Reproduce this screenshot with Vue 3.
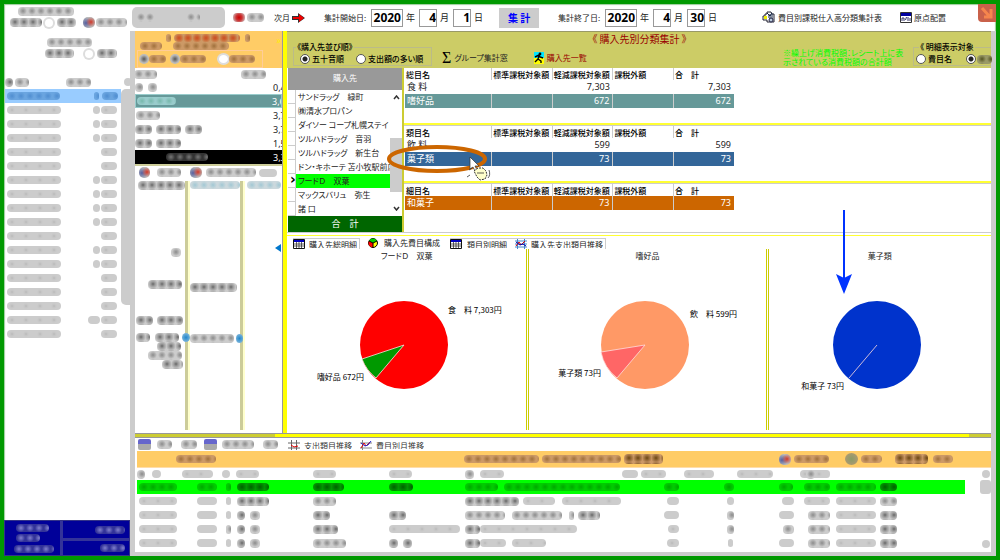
<script setup>
import { h } from 'vue'

// A run of masked-out text: [gap before, width, tone]
const Masks = (props) =>
  h('span', { class: 'masks' }, props.items.map(([gap, width, tone = 'mid']) =>
    h('span', { class: ['mask', 'mask-' + tone], style: { marginLeft: gap + 'px', width: width + 'px' } })))
Masks.props = ['items']

const months = [
  [32, 7, 16], [32, 7, 16], [32, 7, 16], [40, 0, 16], [40, 0, 16], [32, 7, 16], [32, 7, 16], [32, 7, 16], [32, 7, 16],
  [40, 0, 16], [32, 7, 16], [32, 7, 16], [40, 0, 16], [40, 0, 16], [40, 0, 16], [27, 12, 16], [40, 0, 16],
].map(([gap, first, last]) => {
  const row = [[2, 54, 'faint']]
  if (first) row.push([gap, first, 'light'], [1, last, 'faint'])
  else row.push([gap, last, 'faint'])
  return row
})

const subjects = [
  { items: [[0, 8], [5, 9]], n: '0,4' },
  { items: [[1, 39, 'teal']], n: '3,6', cls: 'teal' },
  { items: [[1, 24]], n: '3,7' },
  { items: [[0, 17, 'dark'], [4, 25, 'dark'], [4, 17, 'dark']], n: '3,7' },
  { items: [[0, 17, 'dark'], [4, 25, 'dark']], n: '1,5' },
  { items: [[31, 42, 'black']], n: '3,3', cls: 'black' },
]

const shops = ['サンドラッグ　緑町', '㈱清水プロパン', 'ダイソー コープ札幌ステイ', 'ツルハドラッグ　音羽', 'ツルハドラッグ　新生台',
  'ドン・キホーテ 苫小牧駅前店', 'フードＤ　双葉', 'マックスバリュ　弥生', '諸 口']

const tables = [
  { head: '総目名', rows: [{ name: '食 料', v: '7,303' }, { name: '嗜好品', v: '672', cls: 'teal' }] },
  { head: '類目名', rows: [{ name: '飲 料', v: '599' }, { name: '菓子類', v: '73', cls: 'blue', ring: true }] },
  { head: '細目名', rows: [{ name: '和菓子', v: '73', cls: 'orange' }] },
]

const charts = [
  { title: 'フードＤ　双葉', color: '#ff0000', slice: '#009900', path: 'M108 83L80 116A44 44 0 0 1 66 97Z',
    labels: [{ x: 152, y: 51, t: '食　料 7,303円' }, { x: 68, y: 118, t: '嗜好品 672円', end: true }] },
  { title: '嗜好品', color: '#ff9966', slice: '#ff6666', path: 'M108 83L80 116A44 44 0 0 1 64 90Z',
    labels: [{ x: 153, y: 55, t: '飲　料 599円' }, { x: 64, y: 114, t: '菓子類 73円', end: true }] },
  { title: '菓子類', color: '#0033cc', slice: 'none', path: 'M108 83L80 116', arrow: true,
    labels: [{ x: 75, y: 127, t: '和菓子 73円', end: true }] },
]

const records = [
  [[[2, 38, 'lime']], [[2, 20, 'lime']], [[3, 5, 'lime']], [[0, 32, 'limed']], [[0, 31, 'limed']], [[0, 24, 'limed']], [[0, 33, 'lime'], [6, 116, 'lime']], [[11, 15, 'lime']], [[9, 10, 'lime']], [[9, 14, 'lime']], [[2, 26, 'lime']], [[2, 40, 'lime']], [[0, 17, 'limed']]],
  [[[2, 38, 'faint']], [[2, 20, 'light']], [[3, 5, 'light']], [[0, 32, 'dark']], [[0, 23]], [], [[0, 54, 'dark'], [4, 32, 'faint'], [7, 59, 'faint']], [[14, 12, 'light']], [[12, 7, 'light']], [[12, 12, 'light']], [[2, 26, 'faint']], [[2, 40, 'faint']], [[0, 17]]],
  [[[2, 38, 'faint']], [[2, 20, 'light']], [[3, 5, 'light']], [[0, 8, 'dark'], [5, 10]], [[0, 17, 'dark']], [[0, 17, 'dark']], [[0, 40], [7, 50], [7, 5], [4, 22, 'dark']], [[11, 15, 'light']], [[12, 7]], [[9, 15, 'light']], [[6, 22]], [[2, 40, 'faint']], [[0, 17, 'dark']]],
  [[[2, 38, 'faint']], [[2, 20, 'light']], [[3, 5]], [[0, 8, 'dark'], [5, 10]], [[0, 25, 'dark']], [[0, 71, 'faint']], [[0, 15, 'dark'], [0, 97, 'faint']], [[15, 11, 'faint']], [[12, 7]], [[13, 11]], [[6, 22]], [[2, 40, 'faint']], [[0, 17, 'dark']]],
  [[[2, 38, 'faint']], [[2, 20, 'light']], [[3, 5, 'light']], [[0, 8, 'dark'], [5, 10]], [[0, 33]], [[0, 9, 'dark'], [5, 9, 'dark']], [[0, 15, 'dark'], [0, 26, 'faint'], [6, 34, 'faint']], [[14, 12, 'faint']], [[13, 5, 'light']], [[9, 15, 'light']], [[6, 22]], [[2, 40, 'faint']], [[0, 17, 'dark']]],
]
const recordHead = [
  [[0, 8], [7, 9, 'light']], [[-13, 31, 'faint']], [[-1, 8, 'light']], [[-1, 23, 'faint']], [[0, 23, 'faint']], [[0, 23, 'faint']],
  [[0, 9], [6, 24, 'faint'], [118, 16, 'light']], [[-12, 25, 'faint'], [18, 30, 'faint']], [[22, 36, 'faint']],
  [[30, 29, 'faint']], [[4, 9], [8, 7, 'light']], [], [],
]
</script>

<template>
  <div class="frame">
    <header class="topbar">
      <div class="side-tools">
        <Masks :items="[[14, 56]]" />
        <div class="line"><Masks :items="[[6, 32, 'dark'], [3, 8, 'ring'], [4, 19, 'dark'], [7, 12, 'pie'], [1, 31]]" /></div>
      </div>
      <div class="nav"><div class="veil"><Masks :items="[[4, 18], [32, 14]]" /></div><Masks :items="[[8, 12, 'red'], [2, 17]]" /></div>
      <button class="plain next">次月
        <svg width="13" height="10" viewBox="0 0 13 10"><path d="M0 3h6V0l7 5-7 5V7H0z" fill="#333" /><path d="M1 4h6V1l5 4-5 4V6H1z" fill="#f00000" /></svg>
      </button>
      <div class="date start">
        <label for="y1">集計開始日:</label><input id="y1" class="year" value="2020" /><label for="y1">年</label>
        <input id="m1" aria-label="開始月" value="4" /><label for="m1">月</label><input id="d1" aria-label="開始日" value="1" /><label for="d1">日</label>
      </div>
      <button class="calc">集 計</button>
      <div class="date end">
        <label for="y2">集計終了日:</label><input id="y2" class="year" value="2020" /><label for="y2">年</label>
        <input id="m2" aria-label="終了月" value="4" /><label for="m2">月</label><input id="d2" aria-label="終了日" value="30" /><label for="d2">日</label>
      </div>
      <button class="plain report">
        <svg width="13" height="13" viewBox="0 0 13 13"><path d="M1 5h2V3h2V1h4l1 2h2v8H5V9H1z" fill="#fff" stroke="#223" /><path d="M2 5h3v3H2z" fill="#ee0" /><path d="M6 4h5M6 6h5M7 8h4M5 2l3 3 2-3" stroke="#124" fill="none" /><circle cx="9" cy="9" r="2" fill="#bcd" stroke="#224" /></svg>
        費目別課税仕入高分類集計表
      </button>
      <button class="plain origin">
        <svg width="12" height="11" viewBox="0 0 12 11"><path d="M.5.5h11v10H.5z" fill="#fff" stroke="#333" /><path d="M1 1h10v3H1z" fill="#0000a0" /><path d="M2 9V6h2v3M5.500 8l1-3M8 5v4M10 6v3" stroke="#336" fill="none" /></svg>
        原点配置
      </button>
      <button class="close" aria-label="閉じる"><svg width="18" height="17" viewBox="0 0 18 17"><path d="M4 3l8 9M13 4v8H6" stroke="#f6854d" stroke-width="3" fill="none" /></svg></button>
    </header>

    <div class="body">
      <aside class="months">
        <div class="months-top">
          <Masks :items="[[43, 45]]" /><Masks :items="[[41, 29, 'dark'], [11, 8, 'ring'], [4, 20, 'dark']]" />
        </div>
        <div class="months-head"><Masks :items="[[1, 8, 'dark'], [2, 14], [37, 25], [33, 8, 'light']]" /></div>
        <div class="months-body">
          <div class="months-list">
            <div class="mrow current"><Masks :items="[[2, 53, 'sky'], [34, 5, 'sky'], [3, 16, 'sky']]" /></div>
            <div v-for="(m, i) in months" :key="i" class="mrow"><Masks :items="m" /></div>
          </div>
          <div class="rail"></div>
        </div>
        <div class="totals">
          <div class="total-name"><Masks :items="[[11, 33, 'navy']]" /><Masks :items="[[11, 24, 'navy']]" /><Masks :items="[[9, 40, 'navy']]" /></div>
          <div class="total-vals"><div><Masks :items="[[0, 30, 'navy']]" /></div><div><Masks :items="[[0, 25, 'navy']]" /></div></div>
        </div>
      </aside>

      <main class="work">
        <div class="upper">
          <section class="subjects">
            <div class="amber">
              <Masks :items="[[31, 5, 'amber'], [3, 66, 'rust'], [5, 5, 'amber']]" />
              <Masks :items="[[5, 22, 'amber'], [11, 56, 'amber']]" />
              <div class="amber-box"><Masks :items="[[1, 10, 'dot'], [0, 17, 'amber'], [4, 10, 'dot'], [0, 26, 'amber'], [13, 9, 'ring'], [1, 26, 'amber']]" /></div>
              <span class="more">»</span>
            </div>
            <div class="shead"><Masks :items="[[-1, 23], [84, 25]]" /></div>
            <div v-for="(s, i) in subjects" :key="i" class="srow" :class="s.cls"><Masks :items="s.items" /><span class="num">{{ s.n }}</span></div>
            <div class="stabs"><Masks :items="[[4, 11, 'pie'], [7, 24], [9, 12, 'pie'], [4, 50], [3, 18, 'light']]" /></div>
            <div class="trio">
              <div class="c1">
                <Masks :items="[[3, 47, 'dark']]" />
                <div class="c1-a"><Masks :items="[[36, 10]]" /></div>
                <div class="c1-b"><Masks :items="[[13, 34, 'dark']]" /></div>
                <div class="c1-c"><Masks :items="[[1, 17, 'dark'], [4, 26, 'dark']]" /></div>
                <div class="c1-d"><Masks :items="[[1, 14, 'dark'], [5, 24, 'dark'], [3, 8, 'node']]" /><Masks :items="[[22, 24, 'dark']]" /><Masks :items="[[13, 34]]" /><Masks :items="[[27, 21, 'dark']]" /></div>
              </div>
              <div class="c2">
                <Masks :items="[[0, 50, 'aqua']]" />
                <div class="c2-a"><Masks :items="[[0, 47, 'dark']]" /></div>
                <div class="c2-b"><Masks :items="[[0, 44], [2, 7, 'node']]" /></div>
              </div>
              <div class="c3"><Masks :items="[[1, 34, 'aqua']]" /><span class="collapse"></span></div>
            </div>
          </section>

          <section class="detail">
            <div class="olive">
              <h1>《 購入先別分類集計 》</h1>
              <div class="olive-row">
                <fieldset class="sort"><legend>《購入先並び順》</legend>
                  <label><input type="radio" name="sort" checked />五十音順</label>
                  <label><input type="radio" name="sort" />支出額の多い順</label>
                </fieldset>
                <button class="plain sum"><b>Σ</b>グループ集計窓</button>
                <button class="plain list">
                  <svg width="10" height="12" viewBox="0 0 10 12"><path d="M0 0h10v12H0z" fill="#00e5ff" /><path d="M0 6h10v6H0z" fill="#ff0" /><circle cx="6" cy="2" r="1.4" /><path d="M1 5l4-2 1 2 3 1M5 4L4 7l3 2v2M4 7l-3 3" stroke="#000" stroke-width="1.4" fill="none" /></svg>
                  購入先一覧
                </button>
                <p class="note">※繰上げ消費税額：レシート上に表<br />示されている消費税額の合計額</p>
                <fieldset class="target"><legend>《 明細表示対象</legend>
                  <label><input type="radio" name="target" />費目名</label>
                  <label><input type="radio" name="target" aria-label="細目名" checked /><Masks :items="[[-1, 15, 'olive']]" /></label>
                </fieldset>
              </div>
            </div>

            <div class="mid">
              <div class="shops">
                <div class="shops-head">購入先</div>
                <div class="shops-body">
                  <ul>
                    <li v-for="s in shops" :key="s" :class="{ on: s.startsWith('フード') }"><i></i><span>{{ s }}</span></li>
                  </ul>
                  <div class="scroll"><svg width="7" height="5" viewBox="0 0 7 5"><path d="M1 4l2.500-3L6 4" /></svg><div class="thumb"></div><svg width="7" height="5" viewBox="0 0 7 5"><path d="M1 1l2.500 3L6 1" /></svg></div>
                </div>
                <div class="shops-foot">合　計</div>
              </div>
              <div class="tables">
                <div v-for="t in tables" :key="t.head" class="pane">
                  <table>
                    <thead><tr><th>{{ t.head }}</th><th>標準課税対象額</th><th>軽減課税対象額</th><th>課税外額</th><th>合　計</th></tr></thead>
                    <tbody>
                      <tr v-for="r in t.rows" :key="r.name" :class="r.cls ? ['lit', r.cls] : 'normal'">
                        <td>{{ r.name }}
                          <svg v-if="r.ring" class="ring" width="108" height="40" viewBox="0 0 108 40">
                            <ellipse cx="52" cy="14" rx="48" ry="12" fill="none" stroke="#cc6600" stroke-width="4" />
                            <path d="M85 12v12l3-2 2 4 2-1-2-4h4z" fill="#fff" stroke="#333" stroke-width=".7" />
                            <path d="M89 26l4-3 5 0 3 3 1 4-2 4-5 1-3-3z" fill="#ffffcc" stroke="#333" stroke-dasharray="2 1" />
                            <path d="M92 28h7M85 30l-3 2M104 25c1 3 1 6-1 8M84 25l3-2" stroke="#333" fill="none" stroke-width=".8" />
                          </svg>
                        </td><td></td><td>{{ r.v }}</td><td></td><td>{{ r.v }}</td>
                      </tr>
                    </tbody>
                  </table>
                </div>
              </div>
            </div>

            <nav class="tabs">
              <button class="cut"><svg width="12" height="10" viewBox="0 0 12 10"><path d="M.5.500h11v9H.5z" fill="#fff" stroke="#111" /><path d="M1 1h10v2H1z" fill="#0000c0" /><path d="M1 5h10M1 7h10M3.500 3v6M6 3v6M8.500 3v6" stroke="#222" stroke-width=".7" /></svg><span>購入先総明細</span></button>
              <button class="active"><svg width="10" height="10" viewBox="0 0 10 10"><circle cx="5" cy="5" r="4.500" fill="#ff0" stroke="#000" /><path d="M5 5L1 3a4.500 4.500 0 0 0 4 6.500z" fill="#f00" /><path d="M5 5L1 3a4.500 4.500 0 0 1 8 0z" fill="#0c0" /><path d="M5 5L1 3M5 5l4-2M5 5v5" stroke="#000" /></svg><span>購入先費目構成</span></button>
              <button class="cut third"><svg width="12" height="10" viewBox="0 0 12 10"><path d="M.5.500h11v9H.5z" fill="#fff" stroke="#111" /><path d="M1 1h10v2H1z" fill="#0000c0" /><path d="M1 5h10M1 7h10M3.500 3v6M6 3v6M8.500 3v6" stroke="#222" stroke-width=".7" /></svg><span>類目別明細</span></button>
              <button class="cut"><svg width="12" height="10" viewBox="0 0 12 10"><path d="M0 2h12M0 5h12M0 8h12M2.500 0v10M9.500 0v10" stroke="#48c" /><path d="M1 7l3-4 2 3 4-4" fill="none" stroke="#d00" /><path d="M1 3l4 3 3-1 3 2" fill="none" stroke="#00a" /></svg><span>購入先支出類目推移</span></button>
            </nav>

            <div class="charts">
              <figure v-for="c in charts" :key="c.title">
                <figcaption>{{ c.title }}</figcaption>
                <svg width="222" height="160" viewBox="0 0 222 160">
                  <circle cx="108" cy="83" r="44" :fill="c.color" />
                  <path :d="c.path" :fill="c.slice" stroke="#ffdddd" stroke-width=".8" />
                  <text v-for="l in c.labels" :key="l.t" :x="l.x" :y="l.y" :text-anchor="l.end ? 'end' : 'start'">{{ l.t }}</text>
                </svg>
                <svg v-if="c.arrow" class="arrow" width="16" height="84" viewBox="0 0 16 84"><path d="M8 0v70" stroke="#0033ff" stroke-width="2" /><path d="M0 64l8 4 8-4-8 20z" fill="#0033ff" /></svg>
              </figure>
            </div>
          </section>
        </div>

        <div class="split"></div>

        <section class="records">
          <nav class="rtabs">
            <Masks :items="[[3, 13, 'cal'], [6, 15], [9, 16], [7, 13, 'cal'], [5, 32], [9, 15], [9, 0, 'light']]" />
            <button class="cut"><svg width="12" height="10" viewBox="0 0 12 10"><path d="M0 3h12M0 8h12M3.500 0v10M8.500 0v10" stroke="#666" /><path d="M3 5l3 2 4-1" fill="none" stroke="#d00" /></svg><span>支出類目推移</span></button>
            <button class="cut"><svg width="12" height="10" viewBox="0 0 12 10"><path d="M0 3h12M0 8h12M2.500 0v10" stroke="#888" /><path d="M1 8l3-5 2 3 4-4" fill="none" stroke="#d00" /><path d="M1 3l4 3 3-1 3-4" fill="none" stroke="#22c" /></svg><span>費目別月推移</span></button>
          </nav>
          <div class="amber-bar"><Masks :items="[[39, 40, 'amber'], [248, 75, 'amber'], [3, 79, 'amber'], [3, 39, 'amberd'], [116, 12, 'pie'], [3, 35, 'amber'], [16, 13, 'globe'], [3, 21, 'amber'], [13, 33, 'amberd'], [5, 20, 'amber']]" /></div>
          <div class="rbody">
            <table class="rtable">
              <thead><tr><th v-for="(c, i) in recordHead" :key="i"><Masks :items="c" /></th></tr></thead>
              <tbody><tr v-for="(r, i) in records" :key="i" :class="{ lime: i === 0 }"><td v-for="(c, j) in r" :key="j"><Masks :items="c" /></td></tr></tbody>
            </table>
            <div class="rscroll"><i></i><b></b><i class="down"></i></div>
          </div>
        </section>
      </main>
    </div>
  </div>
</template>

<style>
body { background: #009900; }
.masks { display: flex; align-items: center; flex: none; }
.mask { flex: none; height: 8px; border-radius: 4px; background-color: #ccc; background-position: 1px 0; background-size: 9px 8px; }
.mask-faint { background-image: radial-gradient(circle at 4px 4px, #b2b2b2 0, #c4c4c4 1px, transparent 3px); background-size: 14px 8px; }
.mask-mid { height: 9px; background-image: radial-gradient(circle at 4px 4px, #8c8c8c 0, #aaa 2px, transparent 4px); }
.mask-dark { height: 9px; background-image: radial-gradient(circle at 4px 4px, #666 0, #999 2px, transparent 5px); }
.mask-sky { background-color: #6aa5e0; background-image: radial-gradient(circle at 4px 4px, #4f8ed0 0, transparent 4px); }
.mask-teal { background-color: #99cccc; background-image: radial-gradient(circle at 4px 4px, #77b8ac 0, transparent 4px); }
.mask-aqua { background-color: #ccd8dd; background-image: radial-gradient(circle at 4px 4px, #a2c8d4 0, transparent 4px); }
.mask-black { background-color: #333; background-image: radial-gradient(circle at 4px 4px, #777 0, transparent 4px); }
.mask-navy { background-color: #333399; background-image: radial-gradient(circle at 4px 4px, #8080cc 0, transparent 4px); }
.mask-amber { background-color: #cc9966; background-image: radial-gradient(circle at 4px 4px, #a0703c 0, transparent 4px); }
.mask-amberd { height: 10px; background-color: #cc9966; background-image: radial-gradient(circle at 4px 4px, #6b4513 0, transparent 5px); }
.mask-rust { background-color: #cc9966; background-image: radial-gradient(circle at 4px 4px, #cc4c22 0, #cc6633 2px, transparent 5px); }
.mask-olive { height: 9px; background-color: #999966; background-image: radial-gradient(circle at 4px 4px, #555522 0, transparent 4px); }
.mask-lime { background-color: #00cc00; background-image: radial-gradient(circle at 4px 4px, #00a800 0, transparent 4px); }
.mask-limed { background-color: #009c00; background-image: radial-gradient(circle at 4px 4px, #006000 0, transparent 5px); }
.mask-ring { height: 8px; background: #fff; box-shadow: 0 0 0 2px #ddd; border-radius: 50%; }
.mask-dot { height: 10px; border-radius: 50%; background: radial-gradient(circle, #555 0, #bbb 4px); }
.mask-pie { height: 11px; border-radius: 5px; background: radial-gradient(circle at 8px 5px, #d23a2a 0, transparent 5px), radial-gradient(circle at 3px 6px, #5560a0 0, #bbb 6px); }
.mask-red { height: 9px; background: radial-gradient(circle, #c00 0, #c33 3px, #ccaaaa 6px); }
.mask-node { height: 9px; border-radius: 50%; background: radial-gradient(circle, #2288cc 0, #88bbdd 5px); }
.mask-cal { height: 11px; border-radius: 2px; background: linear-gradient(#6666cc 5px, #aaa 5px); }
.mask-globe { height: 12px; border-radius: 50%; background: radial-gradient(circle, #8a9a66 0, #a99a70 6px); }
</style>

<style scoped>
* { box-sizing: border-box; }
.frame { display: flex; flex-direction: column; min-height: 100vh; border: 4px solid #009900; background: #fff; box-shadow: inset 0 0 1px 1px #99cc99; font: 9px/12px "Noto Sans CJK JP", sans-serif; font-feature-settings: "palt"; color: #222; overflow: hidden; }
button { font: inherit; font-feature-settings: inherit; color: inherit; padding: 0; border: 0; background: none; white-space: nowrap; }
svg { flex: none; display: block; }
.plain { display: flex; align-items: center; gap: 3px; }
.topbar { display: flex; align-items: center; height: 27px; flex: none; }
.side-tools { width: 127px; flex: none; line-height: 8px; }
.line { margin-top: 1px; }
.nav { display: flex; width: 143px; flex: none; align-items: center; }
.veil { width: 93px; margin-left: 1px; padding: 6px 0; background: #ccc; border-radius: 5px; }
.next { width: 32px; flex: none; font-size: 8px; gap: 2px; }
.date { display: flex; align-items: center; gap: 3px; flex: none; }
.date.start { margin-left: 18px; }
.date input { width: 18px; height: 18px; margin-left: 1px; border: 1px solid #999; padding: 0; background: #fff; text-align: right; font: bold 12px "Noto Sans", sans-serif; color: #000; }
.date input.year { width: 32px; margin-left: 0; padding-right: 1px; }
.date label:first-child { width: 44px; font-size: 8px; white-space: nowrap; }
.calc { width: 40px; height: 20px; margin-left: 16px; background: #ccc; color: #0000ff; font-weight: bold; font-size: 10px; }
.date.end { margin-left: 19px; }
.report { margin-left: auto; font-size: 8px; }
.origin { margin-left: 18px; font-size: 8px; gap: 2px; }
.close { width: 18px; height: 18px; margin: 0 0 9px 32px; background: #c9614a; border-radius: 0 0 0 4px; }

.body { display: flex; flex: 1; }
.months { width: 126px; flex: none; display: flex; flex-direction: column; }
.months-top { height: 44px; padding-top: 7px; display: flex; flex-direction: column; gap: 2px; }
.months-head { height: 14px; display: flex; }
.months-body { flex: 1; display: flex; }
.months-list { flex: 1; padding-left: 1px; }
.mrow { height: 14px; display: flex; align-items: center; }
.mrow.current { background: #99ccff; }
.rail { width: 9px; height: 216px; background: #ccc; border-radius: 5px 0 0 5px; }
.totals { display: flex; height: 36px; background: #000099; border: 1px solid #333388; }
.total-name { width: 58px; border-right: 3px solid #333399; display: flex; flex-direction: column; justify-content: space-evenly; }
.total-vals { flex: 1; }
.total-vals div { height: 17px; display: flex; align-items: center; justify-content: flex-end; padding-right: 4px; }
.total-vals div + div { border-top: 3px solid #333399; }

.work { flex: 1; min-width: 0; display: flex; flex-direction: column; border: solid #ccc; border-width: 0 5px 4px 5px; }
.upper { flex: 1; display: flex; }
.subjects { width: 148px; flex: none; display: flex; flex-direction: column; border-right: 1px solid #999; overflow: hidden; }
.amber { position: relative; height: 37px; background: #ffcc66; padding-top: 3px; }
.amber-box { width: 126px; height: 18px; display: flex; align-items: center; border: 1px solid #ffcc99; margin-left: 2px; }
.more { position: absolute; right: 1px; top: 3px; color: #ffee00; font-size: 10px; }
.shead { height: 12px; display: flex; align-items: center; }
.srow { height: 14px; display: flex; align-items: center; justify-content: space-between; overflow: hidden; }
.srow .num { width: 9px; flex: none; font: 9px "Noto Sans", sans-serif; white-space: nowrap; }
.srow.teal { background: #669999; border: 1px solid #99cccc; color: #fff; }
.srow.black { background: #000; color: #fff; box-shadow: 0 2px 0 #cccc99; }
.stabs { height: 17px; padding-top: 3px; }
.trio { flex: 1; display: flex; margin-bottom: 3px; }
.c1 { width: 53px; border-right: 3px solid #cccc99; box-shadow: 2px 0 0 #ffffcc; }
.c2 { width: 55px; padding-left: 2px; border-right: 3px solid #cccc99; box-shadow: 2px 0 0 #ffffcc; }
.c3 { flex: 1; padding-left: 3px; position: relative; }
.c1-a { margin-top: 58px; }
.c1-b { margin-top: 23px; }
.c1-c { margin-top: 27px; }
.c1-d { margin-top: 8px; }
.c2-a { margin-top: 94px; }
.c2-b { margin-top: 42px; }
.collapse { position: absolute; right: 1px; top: 63px; border: 4px solid transparent; border-right: 6px solid #0077cc; border-left: 0; }

.detail { flex: 1; min-width: 0; display: flex; flex-direction: column; border-left: 4px solid #ffff00; }
.olive { height: 37px; background: #cccc66; border-top: 1px solid #999966; padding-left: 1px; }
h1 { margin: 0; height: 14px; text-align: center; font-size: 10px; line-height: 13px; font-weight: 400; color: #990000; }
.olive-row { display: flex; align-items: flex-end; height: 20px; }
fieldset { position: relative; display: flex; align-items: center; height: 19px; margin: 0; padding: 5px 0 0 6px; border: 1px solid #bbbb88; min-width: 0; white-space: nowrap; }
legend { position: absolute; top: -6px; left: 2px; padding: 0 1px; background: #cccc66; font-size: 8px; line-height: 9px; color: #000; font-weight: 500; }
.sort { width: 139px; margin-left: 5px; gap: 12px; }
fieldset label { display: flex; align-items: center; gap: 2px; font-size: 8px; font-weight: 500; color: #000; }
input[type="radio"] { appearance: none; width: 10px; height: 10px; margin: 0; border: 1px solid #555; border-radius: 50%; background: #fff; }
input[type="radio"]:checked { background: radial-gradient(circle, #222 0, #222 2px, #fff 3px); }
.sum { margin-left: 10px; gap: 3px; font-size: 8px; height: 17px; }
.sum b { font: 16px/16px "Liberation Serif", serif; color: #000; }
.list { margin-left: 26px; height: 17px; color: #990000; font-size: 8px; }
.note { margin: 0 10px 0 auto; width: 120px; white-space: nowrap; font-size: 8px; line-height: 9px; color: #00ff00; }
.target { width: 78px; padding-left: 2px; gap: 14px; border-right: 0; }
.target legend { left: 5px; }

.mid { display: flex; border-bottom: 1px solid #ccc; }
.shops { width: 114px; display: flex; flex-direction: column; flex: none; margin-left: 1px; }
.shops-head { height: 22px; background: #999; color: #fff; text-align: center; line-height: 20px; font-size: 8px; }
.shops-body { display: flex; }
ul { flex: 1; min-width: 0; margin: 0; padding: 0; list-style: none; }
li { display: flex; height: 14px; line-height: 14px; font-size: 8px; white-space: nowrap; overflow: hidden; }
li i { width: 8px; flex: none; border-right: 1px solid #ccc; border-bottom: 1px solid #ccc; }
li span { flex: 1; overflow: hidden; padding-left: 2px; }
li.on span { background: #00ff00; }
li.on i::before { content: "›"; display: block; font: bold 14px/10px "DejaVu Sans", sans-serif; padding-left: 2px; color: #000; }
.scroll { width: 12px; display: flex; flex-direction: column; align-items: center; padding: 5px 0; }
.scroll path { fill: none; stroke: #333; stroke-width: 1.5; }
.thumb { width: 12px; height: 54px; background: #ccc; margin: auto 0 14px; }
.shops-foot { height: 16px; background: #006600; color: #fff; text-align: center; line-height: 16px; }
.tables { flex: 1; border-left: 2px solid #cccc33; }
.pane { height: 58px; border-bottom: 1px solid #ccc; box-shadow: inset 0 -2px 0 #ffff33; }
.pane:last-child { height: 48px; border: 0; box-shadow: none; }
table { border-collapse: collapse; table-layout: fixed; }
.pane table { width: 329px; margin-left: 1px; }
.pane th, .pane td { padding: 0 3px 0 0; text-align: right; white-space: nowrap; }
.pane th { width: 60px; height: 12px; padding: 0 0 0 1px; text-align: left; font-size: 8px; line-height: 11px; font-weight: 500; border-left: 1px solid #ccc; color: #000; }
.pane th:first-child { width: 86px; border-left: 0; }
.pane td { height: 14px; line-height: 12px; font-family: "Noto Sans", "Noto Sans CJK JP", sans-serif; }
.pane td:first-child { position: relative; text-align: left; padding-left: 2px; }
.lit { color: #fff; }
.lit td + td { border-left: 1px solid #ccc; }
tr.teal { background: #669999; }
tr.blue { background: #336699; }
tr.orange { background: #cc6600; }
.ring { position: absolute; left: -20px; top: -7px; z-index: 2; }

.tabs { display: flex; height: 14px; margin-top: 2px; padding: 2px 0 0 6px; border-top: 1px solid #ffff33; }
.tabs button, .rtabs button { display: flex; gap: 4px; font-size: 8px; line-height: 9px; }
.tabs .cut { height: 11px; border-right: 1px solid #ccc; border-top: 1px solid #ccc; padding-right: 2px; }
.tabs .third { padding-right: 8px; border-right: 0; gap: 5px; }
.tabs .active { padding: 0 10px 0 8px; gap: 6px; line-height: 10px; }
.cut span { height: 8px; overflow: hidden; margin-top: 1px; }
.charts { flex: 1; display: grid; grid-template-columns: 34fr 34fr 32fr; margin-bottom: 3px; }
figure { position: relative; margin: 0; display: flex; flex-direction: column; align-items: center; }
figure + figure { border-left: 3px double #cccc00; }
figcaption { line-height: 13px; font-size: 8px; }
figure text { font-size: 8px; fill: #000; }
.arrow { position: absolute; left: 50%; margin-left: -44px; top: -39px; z-index: 2; }

.split { height: 5px; background: linear-gradient(90deg, #cccc33 140px, #ffff00 140px, #ffff00 calc(100% - 22px), #cccc33 calc(100% - 22px)); border: solid #999; border-width: 1px 0; }
.records { padding: 0 0 2px 2px; }
.rtabs { display: flex; height: 13px; margin-left: -2px; align-items: center; }
.rtabs button { margin-left: 1px; margin-right: 7px; color: #333; }
.amber-bar { height: 17px; background: #ffcc66; display: flex; align-items: center; border-bottom: 1px solid #ffddaa; }
.rbody { display: flex; justify-content: space-between; }
.rtable { width: 828px; }
.rtable th, .rtable td { padding: 0; height: 14px; font-size: 0; }
.rtable th { height: 12px; width: 76px; }
.rtable th:nth-child(1) { width: 58px; }
.rtable th:nth-child(2) { width: 28px; }
.rtable th:nth-child(3) { width: 14px; }
.rtable th:nth-child(7) { width: 188px; }
.rtable th:nth-child(8) { width: 62px; }
.rtable th:nth-child(9) { width: 55px; }
.rtable th:nth-child(10), .rtable th:nth-child(11) { width: 32px; }
.rtable th:nth-child(12) { width: 46px; }
.rtable th:nth-child(13) { width: auto; }
tr.lime { background: #00ff00; }
.rscroll { width: 11px; display: flex; flex-direction: column; align-items: center; gap: 2px; padding: 2px 0; }
.rscroll i { width: 8px; height: 8px; border-radius: 4px; background: #ccc; }
.rscroll b { width: 11px; height: 14px; background: #ccc; border-radius: 3px; }
.rscroll .down { margin-top: auto; }
</style>
